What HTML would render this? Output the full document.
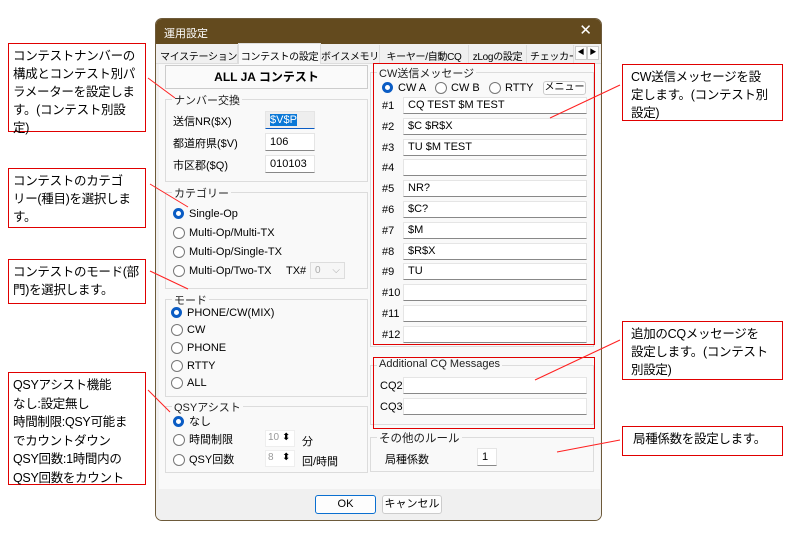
<!DOCTYPE html>
<html><head><meta charset="utf-8"><style>
*{box-sizing:border-box;margin:0;padding:0}
body{width:801px;height:537px;background:#fff;position:relative;overflow:hidden;font-family:"Liberation Sans","Noto Sans CJK JP",sans-serif;font-size:11px;color:#000}
.a{position:absolute}
.call{position:absolute;border:1.5px solid #e00000;background:#fff;font-size:12.5px;line-height:18px;padding:3px 0 0 4px;white-space:nowrap;letter-spacing:-0.3px}
.win{position:absolute;left:155px;top:18px;width:447px;height:503px;background:#f0f0f0;border:1px solid #6d5a3a;border-radius:7px;overflow:hidden}
.title{position:absolute;left:0;top:0;width:100%;height:25px;background:#634a1e;color:#fff;font-size:11px;padding:6px 0 0 8px}
.grp{position:absolute;border:1px solid #dcdcdc;background:#f9f9f9}
.gl{position:absolute;top:-8px;left:6px;background:#f9f9f9;padding:0 2px;font-size:11px;color:#222;white-space:nowrap}
.inp{position:absolute;background:#fff;border:1px solid #e5e5e5;border-bottom:1px solid #888;height:18px;font-size:11px;padding:2px 4px;white-space:nowrap}
.rd{position:absolute;font-size:11px;line-height:13px;padding-left:16px;white-space:nowrap}
.rd:before{content:"";position:absolute;left:0;top:0;width:10px;height:10px;border:1px solid #777;border-radius:50%;background:#fff}
.rd.on:before{border:3.5px solid #0a5cc4;width:5px;height:5px}
.tab{position:absolute;top:26px;height:18px;font-size:10px;padding-top:3px;text-align:center;border-right:1px solid #ddd;white-space:nowrap;overflow:hidden;letter-spacing:-0.3px}
.lbl{position:absolute;font-size:11px;white-space:nowrap}
.btn{position:absolute;background:#fdfdfd;border:1px solid #ccc;border-radius:3px;font-size:11px;text-align:center;white-space:nowrap}
</style></head><body>

<div class="win">
<div class="title">運用設定<span style="position:absolute;right:9px;top:2px;font-size:15px;font-weight:300">✕</span></div>
<div class="a" style="left:0;top:25px;width:447px;height:20px;background:#f0f0f0;border-bottom:1px solid #ddd"></div>
<div class="tab" style="left:4px;width:78px">マイステーション</div>
<div class="tab" style="left:82px;width:83px;top:24px;height:22px;background:#f9f9f9;border:1px solid #ddd;border-bottom:none;padding-top:4px">コンテストの設定</div>
<div class="tab" style="left:165px;width:59px">ボイスメモリ</div>
<div class="tab" style="left:224px;width:89px">キーヤー/自動CQ</div>
<div class="tab" style="left:313px;width:58px">zLogの設定</div>
<div class="tab" style="left:371px;width:47px;text-align:left;padding-left:3px">チェッカー</div>
<div class="btn" style="left:419px;top:27px;width:12px;height:14px;font-size:7px;line-height:12px;border-radius:0">◀</div>
<div class="btn" style="left:431px;top:27px;width:12px;height:14px;font-size:7px;line-height:12px;border-radius:0">▶</div>
<div class="a" style="left:3px;top:45px;width:441px;height:425px;background:#f9f9f9"></div>
<div class="a" style="left:0;top:470px;width:447px;height:33px;background:#f0f0f0"></div>

<div class="btn" style="left:9px;top:46px;width:203px;height:24px;font-weight:bold;font-size:12px;line-height:22px;border-radius:0;background:#fafafa">ALL JA コンテスト</div>

<div class="grp" style="left:9px;top:80px;width:203px;height:83px"><div class="gl">ナンバー交換</div></div>
<div class="lbl" style="left:17px;top:94px">送信NR($X)</div>
<div class="inp" style="left:109px;top:92px;width:50px;background:#eee;border-bottom:1.5px solid #0a5cc4"><span style="background:#0a78d7;color:#fff">$V$P</span></div>
<div class="lbl" style="left:17px;top:116px">都道府県($V)</div>
<div class="inp" style="left:109px;top:114px;width:50px">106</div>
<div class="lbl" style="left:17px;top:138px">市区郡($Q)</div>
<div class="inp" style="left:109px;top:136px;width:50px">010103</div>

<div class="grp" style="left:9px;top:173px;width:203px;height:97px"><div class="gl">カテゴリー</div></div>
<div class="rd on" style="left:17px;top:189px">Single-Op</div>
<div class="rd" style="left:17px;top:208px">Multi-Op/Multi-TX</div>
<div class="rd" style="left:17px;top:227px">Multi-Op/Single-TX</div>
<div class="rd" style="left:17px;top:246px">Multi-Op/Two-TX</div>
<div class="lbl" style="left:130px;top:246px">TX#</div>
<div class="a" style="left:154px;top:243px;width:35px;height:17px;border:1px solid #ddd;background:#f6f6f6;color:#aaa;font-size:10px;padding:2px 4px">0 <span style="float:right">⌵</span></div>

<div class="grp" style="left:9px;top:280px;width:203px;height:98px"><div class="gl">モード</div></div>
<div class="rd on" style="left:15px;top:288px">PHONE/CW(MIX)</div>
<div class="rd" style="left:15px;top:305px">CW</div>
<div class="rd" style="left:15px;top:323px">PHONE</div>
<div class="rd" style="left:15px;top:341px">RTTY</div>
<div class="rd" style="left:15px;top:358px">ALL</div>

<div class="grp" style="left:9px;top:387px;width:203px;height:67px"><div class="gl">QSYアシスト</div></div>
<div class="rd on" style="left:17px;top:397px">なし</div>
<div class="rd" style="left:17px;top:415px">時間制限</div>
<div class="rd" style="left:17px;top:435px">QSY回数</div>
<div class="a" style="left:109px;top:411px;width:30px;height:17px;background:#fff;border:1px solid #eee;color:#999;font-size:10px;padding:1px 2px">10</div>
<div class="a" style="left:126px;top:413px;font-size:10px">⬍</div>
<div class="lbl" style="left:146px;top:414px">分</div>
<div class="a" style="left:109px;top:431px;width:30px;height:17px;background:#fff;border:1px solid #eee;color:#999;font-size:10px;padding:1px 2px">8</div>
<div class="a" style="left:126px;top:433px;font-size:10px">⬍</div>
<div class="lbl" style="left:146px;top:434px">回/時間</div>

<div class="grp" style="left:214px;top:53px;width:224px;height:275px"><div class="gl">CW送信メッセージ</div></div>
<div class="rd on" style="left:226px;top:63px">CW A</div>
<div class="rd" style="left:279px;top:63px">CW B</div>
<div class="rd" style="left:333px;top:63px">RTTY</div>
<div class="btn" style="left:387px;top:62px;width:43px;height:14px;font-size:10px;line-height:12px">メニュー</div>

<div class="lbl" style="left:226px;top:81px">#1</div><div class="inp" style="left:247px;top:78px;width:184px;height:17px;padding-top:1px">CQ TEST $M TEST</div>
<div class="lbl" style="left:226px;top:102px">#2</div><div class="inp" style="left:247px;top:99px;width:184px;height:17px;padding-top:1px">$C $R$X</div>
<div class="lbl" style="left:226px;top:123px">#3</div><div class="inp" style="left:247px;top:120px;width:184px;height:17px;padding-top:1px">TU $M TEST</div>
<div class="lbl" style="left:226px;top:143px">#4</div><div class="inp" style="left:247px;top:140px;width:184px;height:17px"></div>
<div class="lbl" style="left:226px;top:164px">#5</div><div class="inp" style="left:247px;top:161px;width:184px;height:17px;padding-top:1px">NR?</div>
<div class="lbl" style="left:226px;top:185px">#6</div><div class="inp" style="left:247px;top:182px;width:184px;height:17px;padding-top:1px">$C?</div>
<div class="lbl" style="left:226px;top:206px">#7</div><div class="inp" style="left:247px;top:203px;width:184px;height:17px;padding-top:1px">$M</div>
<div class="lbl" style="left:226px;top:227px">#8</div><div class="inp" style="left:247px;top:224px;width:184px;height:17px;padding-top:1px">$R$X</div>
<div class="lbl" style="left:226px;top:247px">#9</div><div class="inp" style="left:247px;top:244px;width:184px;height:17px;padding-top:1px">TU</div>
<div class="lbl" style="left:226px;top:268px">#10</div><div class="inp" style="left:247px;top:265px;width:184px;height:17px"></div>
<div class="lbl" style="left:226px;top:289px">#11</div><div class="inp" style="left:247px;top:286px;width:184px;height:17px"></div>
<div class="lbl" style="left:226px;top:310px">#12</div><div class="inp" style="left:247px;top:307px;width:184px;height:17px"></div>
<div class="a" style="left:217px;top:44px;width:222px;height:282px;border:1.5px solid #e00000"></div>

<div class="grp" style="left:214px;top:346px;width:224px;height:60px"><div class="gl">Additional CQ Messages</div></div>
<div class="lbl" style="left:224px;top:361px">CQ2</div><div class="inp" style="left:247px;top:358px;width:184px;height:17px"></div>
<div class="lbl" style="left:224px;top:382px">CQ3</div><div class="inp" style="left:247px;top:379px;width:184px;height:17px"></div>
<div class="a" style="left:217px;top:338px;width:222px;height:72px;border:1.5px solid #e00000"></div>

<div class="grp" style="left:214px;top:418px;width:224px;height:35px"><div class="gl" style="font-size:11.5px">その他のルール</div></div>
<div class="lbl" style="left:229px;top:432px">局種係数</div>
<div class="inp" style="left:321px;top:429px;width:20px;height:18px">1</div>

<div class="btn" style="left:159px;top:476px;width:61px;height:19px;line-height:17px;border:1px solid #0a6fd0">OK</div>
<div class="btn" style="left:226px;top:476px;width:60px;height:19px;line-height:17px">キャンセル</div>
</div>

<div class="call" style="left:8px;top:43px;width:138px;height:89px">コンテストナンバーの<br>構成とコンテスト別パ<br>ラメーターを設定しま<br>す。(コンテスト別設<br>定)</div>
<div class="call" style="left:8px;top:168px;width:138px;height:60px">コンテストのカテゴ<br>リー(種目)を選択しま<br>す。</div>
<div class="call" style="left:8px;top:259px;width:138px;height:45px">コンテストのモード(部<br>門)を選択します。</div>
<div class="call" style="left:8px;top:372px;width:138px;height:113px;line-height:18.5px">QSYアシスト機能<br>なし:設定無し<br>時間制限:QSY可能ま<br>でカウントダウン<br>QSY回数:1時間内の<br>QSY回数をカウント</div>
<div class="call" style="left:622px;top:64px;width:161px;height:57px;padding-left:8px">CW送信メッセージを設<br>定します。(コンテスト別<br>設定)</div>
<div class="call" style="left:622px;top:321px;width:161px;height:59px;padding-left:8px">追加のCQメッセージを<br>設定します。(コンテスト<br>別設定)</div>
<div class="call" style="left:622px;top:426px;width:161px;height:30px;padding-left:10px">局種係数を設定します。</div>

<svg class="a" style="left:0;top:0" width="801" height="537">
<g stroke="#ff2020" stroke-width="1">
<line x1="148" y1="78" x2="175" y2="98"/>
<line x1="150" y1="184" x2="188" y2="207"/>
<line x1="150" y1="271" x2="188" y2="289"/>
<line x1="148" y1="390" x2="170" y2="412"/>
<line x1="620" y1="85" x2="550" y2="118"/>
<line x1="620" y1="340" x2="535" y2="380"/>
<line x1="620" y1="440" x2="557" y2="452"/>
</g></svg>
</body></html>
